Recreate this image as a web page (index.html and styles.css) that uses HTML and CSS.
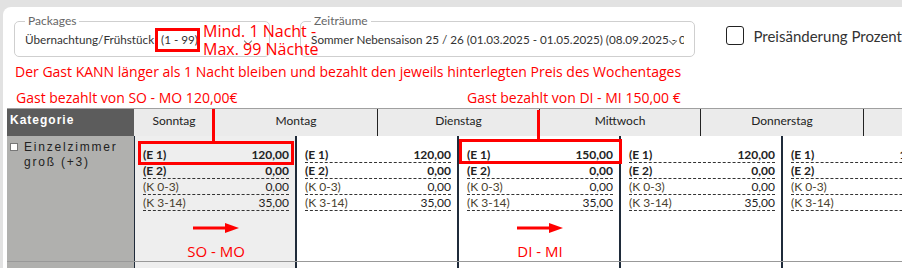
FILE: index.html
```html
<!DOCTYPE html>
<html lang="de">
<head>
   <meta charset="UTF-8">
   <title>Preise</title>
   <link rel="stylesheet" href="styles.css">
</head>
<body>
<div class="page">
   <div class="card">
      <div class="filters">
         <fieldset class="pick pick-pkg">
            <legend>Packages</legend>
            <div class="pick-value">Übernachtung/Frühstück <span class="range">(1 - 99)</span></div>
            <span class="chev"></span>
         </fieldset>
         <fieldset class="pick pick-period">
            <legend>Zeiträume</legend>
            <div class="pick-value">Sommer Nebensaison 25 / 26 (01.03.2025 - 01.05.2025) (08.09.2025 - 01.10.2025)</div>
            <span class="chev"></span>
         </fieldset>
         <label class="check"><span class="box"></span>Preisänderung Prozent</label>
      </div>

      <p class="note">Der Gast KANN länger als 1 Nacht bleiben und bezahlt den jeweils hinterlegten Preis des Wochentages</p>
      <div class="prices">
         <span class="price-a">Gast bezahlt von SO - MO 120,00€</span>
         <span>Gast bezahlt von DI - MI 150,00 €</span>
      </div>

      <div class="grid">
         <div class="head-row">
            <div class="h-cat">Kategorie</div>
            <div class="h-day h-first">Sonntag</div>
            <div class="h-day">Montag</div>
            <div class="h-day">Dienstag</div>
            <div class="h-day">Mittwoch</div>
            <div class="h-day">Donnerstag</div>
            <div class="h-day">Freitag</div>
         </div>

         <div class="row">
            <div class="cat"><span class="cb"></span><span>Einzelzimmer groß (+3)</span></div>
            <div class="day day-sun">
               <div class="rate rate-adult"><span>(E 1)</span><span>120,00</span></div>
               <div class="rate rate-adult"><span>(E 2)</span><span>0,00</span></div>
               <div class="rate rate-kid"><span>(K 0-3)</span><span>0,00</span></div>
               <div class="rate rate-kid"><span>(K 3-14)</span><span>35,00</span></div>
               <div class="mark">
                  <svg width="46" height="10" viewBox="0 0 46 10"><line x1="0" y1="5" x2="34" y2="5" stroke="#f00" stroke-width="3"/><polygon points="32,0 46,5 32,10" fill="#f00"/></svg>
                  <div class="mark-label">SO - MO</div>
               </div>
            </div>
            <div class="day">
               <div class="rate rate-adult"><span>(E 1)</span><span>120,00</span></div>
               <div class="rate rate-adult"><span>(E 2)</span><span>0,00</span></div>
               <div class="rate rate-kid"><span>(K 0-3)</span><span>0,00</span></div>
               <div class="rate rate-kid"><span>(K 3-14)</span><span>35,00</span></div>
            </div>
            <div class="day">
               <div class="rate rate-adult"><span>(E 1)</span><span>150,00</span></div>
               <div class="rate rate-adult"><span>(E 2)</span><span>0,00</span></div>
               <div class="rate rate-kid"><span>(K 0-3)</span><span>0,00</span></div>
               <div class="rate rate-kid"><span>(K 3-14)</span><span>35,00</span></div>
               <div class="mark">
                  <svg width="46" height="10" viewBox="0 0 46 10"><line x1="0" y1="5" x2="34" y2="5" stroke="#f00" stroke-width="3"/><polygon points="32,0 46,5 32,10" fill="#f00"/></svg>
                  <div class="mark-label">DI - MI</div>
               </div>
            </div>
            <div class="day">
               <div class="rate rate-adult"><span>(E 1)</span><span>120,00</span></div>
               <div class="rate rate-adult"><span>(E 2)</span><span>0,00</span></div>
               <div class="rate rate-kid"><span>(K 0-3)</span><span>0,00</span></div>
               <div class="rate rate-kid"><span>(K 3-14)</span><span>35,00</span></div>
            </div>
            <div class="day">
               <div class="rate rate-adult"><span>(E 1)</span><span>120,00</span></div>
               <div class="rate rate-adult"><span>(E 2)</span><span>0,00</span></div>
               <div class="rate rate-kid"><span>(K 0-3)</span><span>0,00</span></div>
               <div class="rate rate-kid"><span>(K 3-14)</span><span>35,00</span></div>
            </div>
            <div class="day">
               <div class="rate rate-adult"><span>(E 1)</span><span>120,00</span></div>
               <div class="rate rate-adult"><span>(E 2)</span><span>0,00</span></div>
               <div class="rate rate-kid"><span>(K 0-3)</span><span>0,00</span></div>
               <div class="rate rate-kid"><span>(K 3-14)</span><span>35,00</span></div>
            </div>
         </div>

         <div class="row">
            <div class="cat"></div>
            <div class="day day-sun"></div>
            <div class="day"></div>
            <div class="day"></div>
            <div class="day"></div>
            <div class="day"></div>
            <div class="day"></div>
         </div>
      </div>
   </div>

   <!-- annotations drawn over the screenshot -->
   <div class="anno-box box-range"></div>
   <div class="anno-text">Mind. 1 Nacht -<br>Max. 99 Nächte</div>
   <div class="anno-line line-sun"></div>
   <div class="anno-box box-sun"></div>
   <div class="anno-line line-tue"></div>
   <div class="anno-box box-tue"></div>
</div>
</body>
</html>
```

FILE: styles.css
```css
body{
    margin: 0;
    background: #e2e2e2;
    font-family: Lato, "Open Sans", sans-serif;
}
.page{
    position: relative;
    width: 902px;
    height: 268px;
    overflow: hidden;
    padding: 7px 0 0 3px;
    box-sizing: border-box;
}
.card{
    background: #fff;
    border-top-left-radius: 8px;
    padding: 7px 0 0 4px;
    height: 100%;
    box-sizing: border-box;
}

/* filter bar */
.filters{
    display: flex;
    align-items: flex-start;
    padding-left: 7px;
}
.pick{
    position: relative;
    margin: 0;
    padding: 0 10px 9px 10px;
    border: 1px solid #cfcfcf;
    border-radius: 5px;
    min-width: 0;
    box-sizing: border-box;
}
.pick legend{
    padding: 0 3px;
    font-size: 12px;
    line-height: 14px;
    color: #666;
}
.pick-value{
    margin-top: 3px;
    font-size: 11.7px;
    line-height: 16px;
    color: #333;
    white-space: nowrap;
    overflow: hidden;
}
.range{
    margin-left: 4px;
}
.pick-pkg{
    width: 259px;
}
.pick-period{
    width: 400px;
    margin-left: 30px;
}
.chev{
    position: absolute;
    right: 18px;
    top: 10px;
    width: 5px;
    height: 5px;
    border-right: 1px solid #777;
    border-bottom: 1px solid #777;
    transform: rotate(45deg);
}
.check{
    display: flex;
    align-items: center;
    gap: 9px;
    margin: 12px 0 0 31px;
    font-size: 15px;
    color: #333;
    white-space: nowrap;
}
.check .box{
    width: 18px;
    height: 19px;
    border: 1.5px solid #222;
    border-radius: 3px;
    box-sizing: border-box;
}

/* red notes */
.note{
    margin: 5px 0 0 8px;
    font-family: "Open Sans", sans-serif;
    font-size: 14px;
    line-height: 20px;
    color: #f00;
    white-space: nowrap;
}
.prices{
    display: flex;
    margin-top: 6px;
    font-family: "Open Sans", sans-serif;
    font-size: 14px;
    line-height: 20px;
    color: #f00;
    white-space: nowrap;
}
.price-a{
    width: 451px;
    padding-left: 9px;
}

/* price grid */
.grid{
    width: 1099px;
    border-top: 1px solid #a0a0a0;
}
.head-row{
    display: grid;
    grid-template-columns: 127px 80px 163px 162px 161px 163px 162px;
    height: 27px;
}
.h-cat{
    background: #5c5c5c;
    color: #fff;
    font-family: "Liberation Sans", Arial, sans-serif;
    font-weight: bold;
    font-size: 12px;
    letter-spacing: 1px;
    padding: 4px 3px 0;
}
.h-day{
    background: #ebebeb;
    border-left: 1px solid #222;
    color: #222;
    font-size: 12px;
    text-align: center;
    padding-top: 4px;
}
.h-first{
    border-left: none;
}
.row{
    display: grid;
    grid-template-columns: 127px repeat(6, 162px);
    height: 125px;
    border-bottom: 1px solid #999;
}
.cat{
    display: flex;
    align-items: flex-start;
    gap: 6px;
    background: #b0b0ae;
    padding: 4px 3px 0;
    font-family: "Liberation Sans", Arial, sans-serif;
    font-size: 12px;
    line-height: 15px;
    letter-spacing: 1.8px;
    color: #222;
}
.cb{
    flex: none;
    width: 6px;
    height: 6px;
    margin-top: 3px;
    background: #fff;
    border: 1px solid #777;
}
.day{
    background: #fff;
    border-left: 1px solid #1f2b3a;
    border-right: 1px solid #1f2b3a;
    padding: 11px 6px 0 8px;
}
.day-sun{
    background: #eeeeee;
}
.rate{
    display: flex;
    justify-content: space-between;
    border-bottom: 1px dashed #333;
    font-size: 12px;
    line-height: 15px;
    color: #222;
}
.rate-adult{
    font-weight: bold;
}
.rate-kid span:first-child{
    color: #4a3f2e;
}
.mark{
    margin-top: 12px;
    text-align: center;
}
.mark svg{
    display: block;
    margin: 0 auto;
}
.mark-label{
    margin-top: 8px;
    font-family: "Open Sans", sans-serif;
    font-size: 15px;
    line-height: 20px;
    color: #f00;
}

/* annotations */
.anno-box{
    position: absolute;
    border: 3px solid #f00;
    box-sizing: border-box;
}
.anno-line{
    position: absolute;
    width: 3px;
    background: #f00;
}
.anno-text{
    position: absolute;
    left: 203px;
    top: 22px;
    font-family: "Open Sans", sans-serif;
    font-size: 16px;
    line-height: 18px;
    color: #f00;
    white-space: nowrap;
}
.box-range{
    left: 155px;
    top: 28px;
    width: 45px;
    height: 24px;
}
.line-sun{
    left: 212px;
    top: 109px;
    height: 33px;
}
.box-sun{
    left: 138px;
    top: 141px;
    width: 156px;
    height: 24px;
}
.line-tue{
    left: 537px;
    top: 110px;
    height: 30px;
}
.box-tue{
    left: 459px;
    top: 139px;
    width: 163px;
    height: 25px;
}
```
